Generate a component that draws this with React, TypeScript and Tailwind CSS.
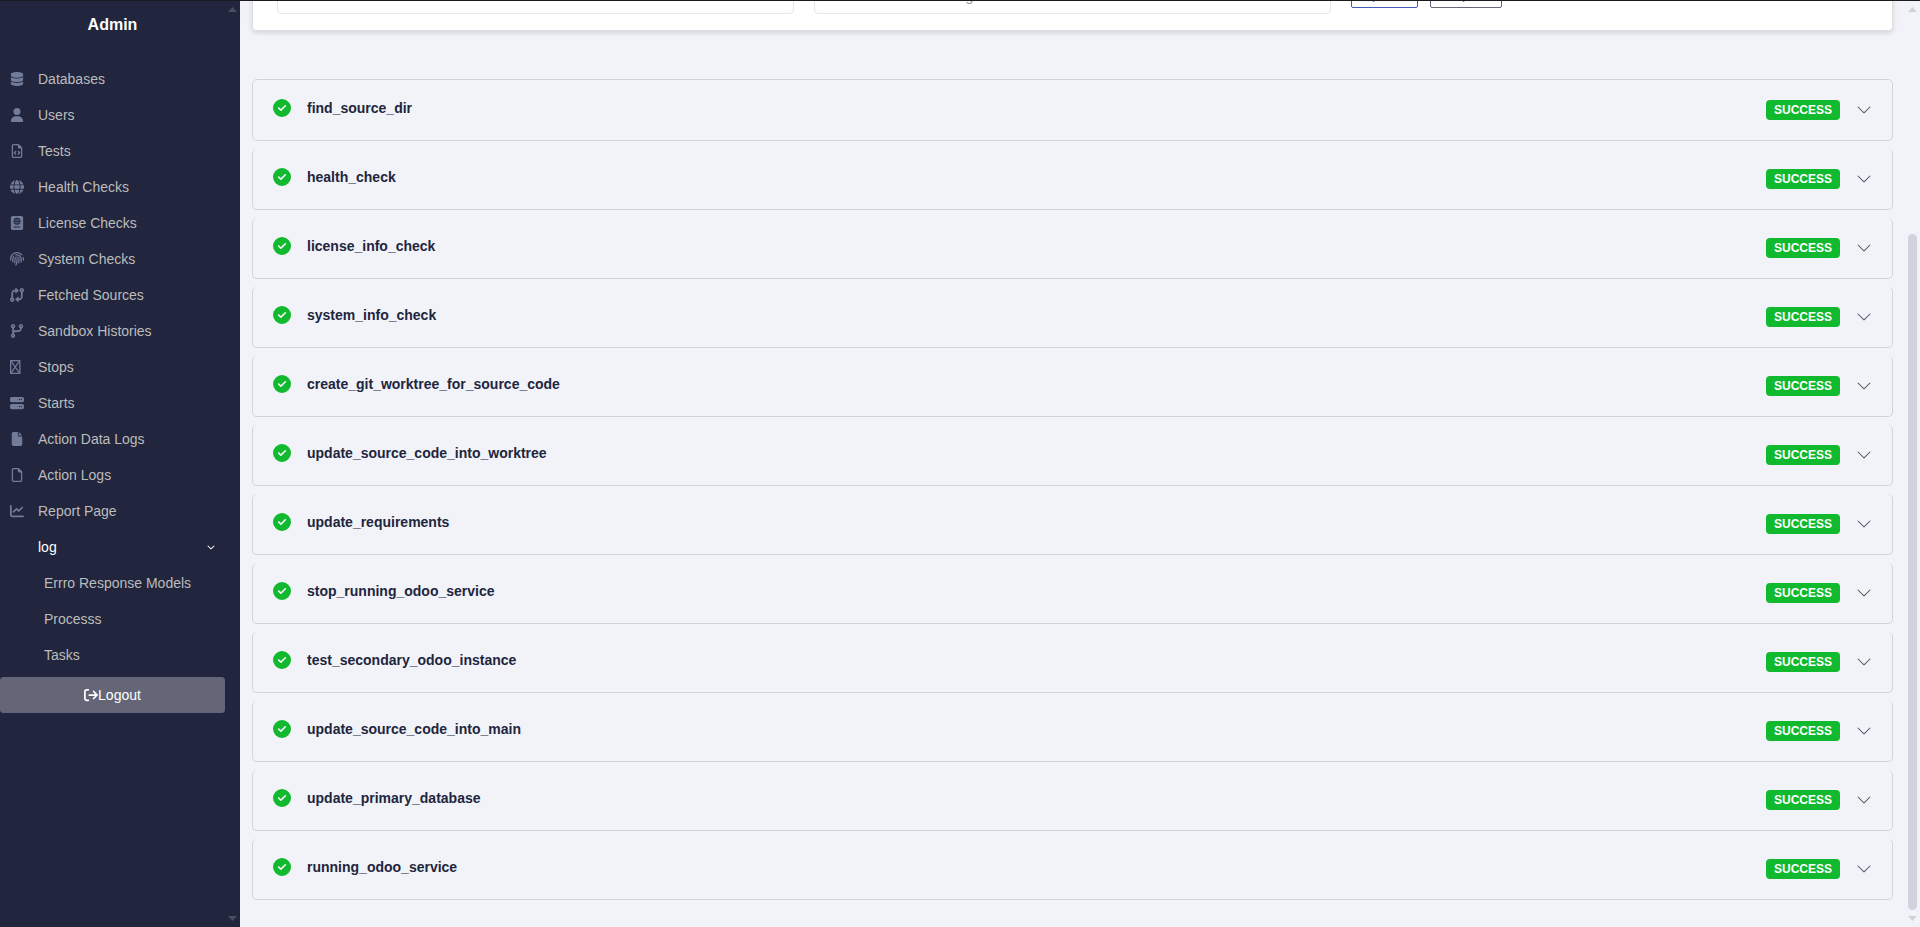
import React, { useState } from 'react'
import type { IconType } from 'react-icons'
import {
  FaDatabase, FaUser, FaRegFileCode, FaGlobe, FaPassport, FaFingerprint, FaCodeBranch,
  FaServer, FaFile, FaRegFile, FaChartLine, FaCircleCheck, FaArrowRightFromBracket,
  FaCodeCompare, FaChevronDown,
} from 'react-icons/fa6'
import { BsChevronDown } from 'react-icons/bs'

interface NavEntry {
  label: string
  icon: React.ReactNode
}

// Narrow box with crossed diagonals
function CrossedBox({ className }: { className?: string }) {
  return (
    <svg viewBox="0 0 384 512" className={className} fill="none" stroke="currentColor" strokeWidth={48}>
      <rect x={24} y={24} width={336} height={464} />
      <path d="M48 48 L336 464 M336 48 L48 464" strokeWidth={44} />
    </svg>
  )
}

const fa = (Icon: IconType) => <Icon className="h-[14px] w-auto" />

const NAV: NavEntry[] = [
  { label: 'Databases', icon: fa(FaDatabase) },
  { label: 'Users', icon: fa(FaUser) },
  { label: 'Tests', icon: fa(FaRegFileCode) },
  { label: 'Health Checks', icon: fa(FaGlobe) },
  { label: 'License Checks', icon: fa(FaPassport) },
  { label: 'System Checks', icon: fa(FaFingerprint) },
  { label: 'Fetched Sources', icon: fa(FaCodeCompare) },
  { label: 'Sandbox Histories', icon: fa(FaCodeBranch) },
  { label: 'Stops', icon: <CrossedBox className="h-[14px] w-auto" /> },
  { label: 'Starts', icon: fa(FaServer) },
  { label: 'Action Data Logs', icon: fa(FaFile) },
  { label: 'Action Logs', icon: fa(FaRegFile) },
  { label: 'Report Page', icon: fa(FaChartLine) },
]

const LOG_ITEMS = ['Errro Response Models', 'Processs', 'Tasks']

const STEPS = [
  'find_source_dir',
  'health_check',
  'license_info_check',
  'system_info_check',
  'create_git_worktree_for_source_code',
  'update_source_code_into_worktree',
  'update_requirements',
  'stop_running_odoo_service',
  'test_secondary_odoo_instance',
  'update_source_code_into_main',
  'update_primary_database',
  'running_odoo_service',
]

function ScrollArrow({ down }: { down?: boolean }) {
  return (
    <svg viewBox="0 0 9 5" className="h-[5px] w-[9px] shrink-0" fill="currentColor">
      <path d={down ? 'M0 0 H9 L4.5 5 Z' : 'M0 5 H9 L4.5 0 Z'} />
    </svg>
  )
}

function Sidebar() {
  const [logOpen, setLogOpen] = useState(true)

  return (
    <aside className="flex w-60 shrink-0 bg-[#21253d]">
      <div className="flex min-w-0 flex-1 flex-col">
        <h1 className="pt-3 text-center text-base leading-6 font-bold text-white">Admin</h1>
        <nav className="mt-6">
          <ul>
            {NAV.map((item) => (
              <li key={item.label}>
                <a href="#" className="flex h-9 items-center pl-[10px] text-[#bcbcbc]">
                  <span className="w-7 shrink-0 text-[#727b98]">{item.icon}</span>
                  {item.label}
                </a>
              </li>
            ))}
            <li>
              <button
                className="flex h-9 w-full items-center justify-between pr-[10px] pl-[38px] text-white"
                onClick={() => setLogOpen(!logOpen)}
              >
                log
                <FaChevronDown className="size-2" />
              </button>
              {logOpen && (
                <ul>
                  {LOG_ITEMS.map((label) => (
                    <li key={label}>
                      <a href="#" className="flex h-9 items-center pl-11 text-[#bcbcbc]">{label}</a>
                    </li>
                  ))}
                </ul>
              )}
            </li>
          </ul>
        </nav>
        <button className="mt-1 flex h-9 items-center justify-center rounded-[3px] border border-[#616478] bg-[#646677] text-white">
          <FaArrowRightFromBracket className="size-[14px]" />
          Logout
        </button>
      </div>
      <div className="flex w-[15px] shrink-0 flex-col items-center justify-between py-[6px] text-[#4a4d60]">
        <ScrollArrow />
        <ScrollArrow down />
      </div>
    </aside>
  )
}

function FilterCard() {
  return (
    <form className="flex shrink-0 items-end gap-5 rounded-[4px] border border-[#dedee2] bg-white px-6 pb-4 shadow-[0_2px_5px_rgba(0,0,0,0.12)]">
      <input
        aria-label="Name"
        className="h-9 w-[517px] shrink rounded-[4px] border border-[#e6e6e8] px-3"
      />
      <input
        aria-label="Status"
        placeholder="Search in the status log"
        className="h-9 w-[517px] shrink rounded-[4px] border border-[#e6e6e8] px-3 placeholder:text-[#8f90a0]"
      />
      <div className="mb-[6px] flex gap-3">
        <button type="button" className="h-7 w-[67px] rounded-[2px] border border-[#4658b8] text-[#4658b8]">Update</button>
        <button type="button" className="h-7 w-[72px] rounded-[2px] border border-[#66687a] text-[#66687a]">Export</button>
      </div>
    </form>
  )
}

function StepRow({ name }: { name: string }) {
  return (
    <li className="group">
      <button className="flex h-[61px] w-full items-center rounded-[5px] border border-t-0 border-[#d1d3dc] px-5 text-left group-first:h-[62px] group-first:border-t">
        <span className="flex flex-1 items-center gap-4 pb-1 font-bold text-[#21253d]">
          <FaCircleCheck className="size-[18px] shrink-0 text-[#10b92d]" />
          {name}
        </span>
        <span className="rounded-[4px] bg-[#10b92d] px-2 text-xs leading-5 font-bold text-white">SUCCESS</span>
        <BsChevronDown className="ml-4 size-4 text-[#4d4f60]" />
      </button>
    </li>
  )
}

export default function App() {
  return (
    <div className="flex h-screen overflow-hidden border-t border-[#1b1a1e] bg-[#f2f3f9] font-['Liberation_Sans',Arial,sans-serif] text-sm leading-5">
      <Sidebar />
      <main className="flex min-w-0 flex-1 flex-col justify-end pr-[10px] pb-[27px] pl-3">
        <FilterCard />
        <ul className="mt-12 flex shrink-0 flex-col gap-2">
          {STEPS.map((name) => <StepRow key={name} name={name} />)}
        </ul>
      </main>
      <div className="flex w-[17px] shrink-0 flex-col items-end py-[6px] pr-[3px] text-[#d0d2da]">
        <ScrollArrow />
        <div className="mt-auto mb-[6px] h-[676px] w-[9px] rounded-full bg-[#d0d2dd]" />
        <ScrollArrow down />
      </div>
    </div>
  )
}
